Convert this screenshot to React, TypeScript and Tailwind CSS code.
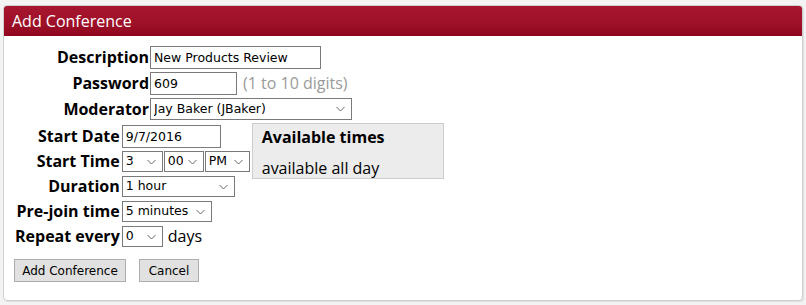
import { ReactNode } from 'react';

const labelFont = { fontFamily: '"Open Sans", "Noto Sans", sans-serif' };
const fieldFont = { fontFamily: '"DejaVu Sans", Verdana, sans-serif' };

function Chevron() {
  return (
    <svg width="9" height="5" viewBox="0 0 9 5" className="pointer-events-none absolute right-[7px] top-1/2 -translate-y-1/2" aria-hidden="true">
      <path d="M0.5 0.5 L4.5 4.5 L8.5 0.5" fill="none" stroke="#666" strokeWidth="1" />
    </svg>
  );
}

function Select({ value, width, height = 'h-[21px]' }: { value: string; width: string; height?: string }) {
  return (
    <span className={`relative block ${height} ${width}`}>
      <select
        defaultValue={value}
        className="block h-full w-full appearance-none border border-[#7a7a7a] bg-white pl-[3px] pr-5 text-[12.5px] text-black outline-none"
        style={fieldFont}
      >
        <option>{value}</option>
      </select>
      <Chevron />
    </span>
  );
}

function Field({ value, width }: { value: string; width: string }) {
  return (
    <input
      defaultValue={value}
      className={`block h-[23px] ${width} border border-[#7a7a7a] bg-white px-[3px] text-[12.5px] text-black outline-none`}
      style={fieldFont}
    />
  );
}

function Label({ children }: { children: ReactNode }) {
  return <label className="block whitespace-nowrap text-right text-[16px] font-bold leading-[23px] text-black">{children}</label>;
}

function Button({ children, width }: { children: ReactNode; width: string }) {
  return (
    <button
      type="button"
      className={`h-[23px] ${width} border border-[#adadad] bg-[#e1e1e1] text-[12px] text-black`}
      style={fieldFont}
    >
      {children}
    </button>
  );
}

export default function App() {
  return (
    <div className="min-h-[305px] bg-[#f3f3f3] px-[3px] pt-[5px]" style={labelFont}>
      <div className="h-[296px] w-[800px] overflow-hidden rounded-[4px] border border-[#cfcfcf] bg-white shadow-[1px_1px_1px_rgba(0,0,0,0.08)]">
        <div className="flex h-[30px] items-center bg-[linear-gradient(180deg,#a7162f_0%,#9f1129_55%,#90051e_100%)] px-[8px] text-[16px] text-white">
          Add Conference
        </div>

        <div className="px-[11px] pt-[8px]">
          <div className="grid auto-rows-[26px] grid-cols-[134px_auto] items-center gap-x-[1px]">
            <Label>Description</Label>
            <div className="flex">
              <Field value="New Products Review" width="w-[171px]" />
            </div>
            <Label>Password</Label>
            <div className="flex items-center gap-[6px]">
              <Field value="609" width="w-[87px]" />
              <span className="text-[16px] leading-[23px] text-[#9a9a9a]">(1 to 10 digits)</span>
            </div>
            <Label>Moderator</Label>
            <div className="flex">
              <Select value="Jay Baker (JBaker)" width="w-[202px]" height="h-[22px]" />
            </div>
          </div>

          <div className="mt-[2px] grid auto-rows-[25px] grid-cols-[auto_auto_1fr] items-center gap-x-[2px]">
            <Label>Start Date</Label>
            <div className="flex">
              <Field value="9/7/2016" width="w-[99px]" />
            </div>
            <div className="row-span-2 self-start">
              <div className="mb-[-5px] mt-[-1px] h-[56px] w-[192px] border border-[#cdcdcd] bg-[#ececec] px-[9px] pt-[1px] text-[16px] text-black">
                <div className="font-bold leading-[24px]">Available times</div>
                <div className="mt-[7px] leading-[24px]">available all day</div>
              </div>
            </div>
            <Label>Start Time</Label>
            <div className="flex gap-[1px]">
              <Select value="3" width="w-[41px]" />
              <Select value="00" width="w-[40px]" />
              <Select value="PM" width="w-[45px]" />
            </div>
            <Label>Duration</Label>
            <div className="col-span-2 flex">
              <Select value="1 hour" width="w-[113px]" />
            </div>
            <Label>Pre-join time</Label>
            <div className="col-span-2 flex">
              <Select value="5 minutes" width="w-[90px]" />
            </div>
            <Label>Repeat every</Label>
            <div className="col-span-2 flex items-center gap-[5px]">
              <Select value="0" width="w-[41px]" />
              <span className="text-[16px] leading-[23px] text-black">days</span>
            </div>
          </div>

          <div className="ml-[-1px] mt-[10px] flex gap-[13px]">
            <Button width="w-[112px]">Add Conference</Button>
            <Button width="w-[60px]">Cancel</Button>
          </div>
        </div>
      </div>
    </div>
  );
}
